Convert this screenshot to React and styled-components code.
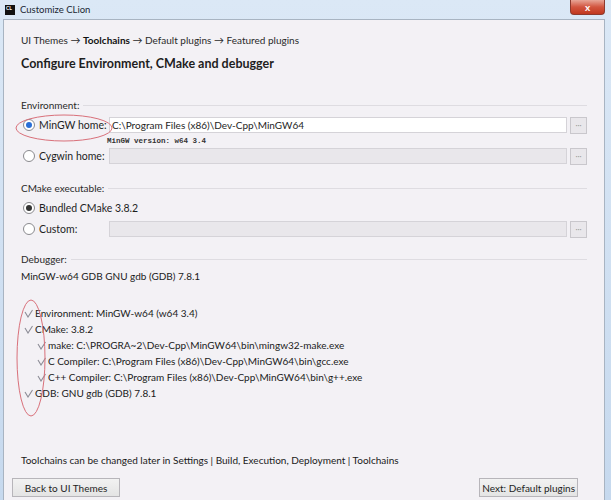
import React from 'react'
import styled, { createGlobalStyle } from 'styled-components'

const Global = createGlobalStyle`
  html, body { margin: 0; padding: 0; background: #c9dbee; }
  body { font-family: Lato, "Noto Sans", sans-serif; color: #1e1e1e; }
`

const Window = styled.div`
  width: 611px;
  height: 500px;
  display: flex;
  flex-direction: column;
  background: linear-gradient(180deg, #dbe8f6 0%, #c6d9ee 100%);
  overflow: hidden;
`

const TitleBar = styled.div`
  height: 19px;
  display: flex;
  align-items: center;
  padding: 0 6px 0 5px;
  gap: 5px;
  font-size: 9.5px;
  color: #1b2733;
`

const AppIcon = styled.div`
  width: 10px;
  height: 10px;
  background: #111;
  color: #fff;
  font-size: 5px;
  font-weight: 700;
  line-height: 6px;
  padding-left: 1px;
  box-sizing: border-box;
`

const CloseBtn = styled.div`
  margin-left: auto;
  width: 33px;
  height: 14px;
  margin-top: -5px;
  border-radius: 0 0 4px 4px;
  background: linear-gradient(180deg, #e8a597 0%, #d2553f 50%, #c1381f 100%);
  border: 1px solid #8d3a2e;
  border-top: none;
  color: #fff;
  font-size: 10px;
  font-weight: 700;
  display: flex;
  align-items: center;
  justify-content: center;
`

const Body = styled.div`
  flex: 1;
  margin: 0 6px 0 3px;
  background: #f3f1f5;
  border: 1px solid #a8b4c2;
  border-bottom: none;
  padding: 13px 17px 0 17px;
  display: flex;
  flex-direction: column;
  position: relative;
  font-size: 10px;
  line-height: 14px;
  color: #1a1a1a;
`

const Crumbs = styled.div`
  font-size: 10px;
  color: #2a2a2a;
  b { font-weight: 700; color: #111; }
`

const Heading = styled.div`
  margin-top: 9px;
  line-height: 16px;
  font-size: 12.5px;
  font-weight: 700;
  color: #1e1e1e;
`

const Legend = styled.div`
  display: flex;
  align-items: center;
  gap: 4px;
  margin-top: ${p => p.$top}px;
  font-size: 10px;
  color: #2a2a2a;
  &::after {
    content: '';
    flex: 1;
    height: 1px;
    background: #dedce1;
  }
`

const Row = styled.div`
  display: flex;
  align-items: center;
  margin-top: ${p => p.$top || 0}px;
  height: 18px;
`

const Radio = styled.span`
  width: 10px;
  height: 10px;
  border-radius: 50%;
  border: 1px solid #8a8a8e;
  background: #fff;
  margin: 0 4px 0 2px;
  display: flex;
  align-items: center;
  justify-content: center;
  flex: none;
  &::after {
    content: '';
    width: 6px;
    height: 6px;
    border-radius: 50%;
    background: ${p => (p.$blue ? '#2a6fd6' : '#333')};
    display: ${p => (p.$on ? 'block' : 'none')};
  }
`

const Label = styled.span`
  width: ${p => (p.$auto ? 'auto' : '70px')};
  white-space: nowrap;
  flex: none;
  font-size: 10.5px;
  color: #1e1e1e;
`

const Field = styled.div`
  flex: 1;
  height: 16px;
  box-sizing: border-box;
  border: 1px solid #d5d3d8;
  background: ${p => (p.$on ? '#ffffff' : '#e9e7eb')};
  font-size: 10px;
  line-height: 14px;
  padding-left: 2px;
  color: #1e1e1e;
  white-space: nowrap;
`

const Browse = styled.div`
  width: 17px;
  height: 17px;
  margin-left: 3px;
  box-sizing: border-box;
  border: 1px solid #c9c7cc;
  background: #e9e7eb;
  color: #999;
  font-size: 8px;
  display: flex;
  align-items: center;
  justify-content: center;
  flex: none;
`

const Mono = styled.div`
  margin: 2px 0 0 86px;
  font-family: "Liberation Mono", monospace;
  font-size: 7.5px;
  line-height: 10px;
  font-weight: 700;
  color: #333;
  height: 10px;
`

const Plain = styled.div`
  margin-top: ${p => p.$top || 0}px;
`

const Checks = styled.div`
  margin-top: 22px;
  display: flex;
  flex-direction: column;
`

const Check = styled.div`
  height: 16px;
  display: flex;
  align-items: center;
  gap: 2px;
  padding-left: ${p => p.$level * 13 + 3}px;
`

const Tick = () => (
  <svg width="9" height="9" viewBox="0 0 9 9">
    <path d="M1 3 L4 8 L8.5 1" fill="none" stroke="#8c8c96" strokeWidth="1.1" />
  </svg>
)

const Note = styled.div`
  margin-top: auto;
`

const Buttons = styled.div`
  display: flex;
  justify-content: space-between;
  padding: 11px 26px 3px 8px;
  margin: 0 -17px;
`

const Btn = styled.div`
  height: 19px;
  min-width: ${p => p.$w}px;
  padding: 0 2px;
  box-sizing: border-box;
  white-space: nowrap;
  border: 1px solid #b7b5ba;
  background: linear-gradient(180deg, #f2f2f2 0%, #e4e4e4 100%);
  font-size: 10px;
  display: flex;
  align-items: center;
  justify-content: center;
  color: #1e1e1e;
`

const Ring = styled.svg`
  position: absolute;
  pointer-events: none;
`

export default function App() {
  const checks = [
    [0, 'Environment: MinGW-w64 (w64 3.4)'],
    [0, 'CMake: 3.8.2'],
    [1, 'make: C:\\PROGRA~2\\Dev-Cpp\\MinGW64\\bin\\mingw32-make.exe'],
    [1, 'C Compiler: C:\\Program Files (x86)\\Dev-Cpp\\MinGW64\\bin\\gcc.exe'],
    [1, 'C++ Compiler: C:\\Program Files (x86)\\Dev-Cpp\\MinGW64\\bin\\g++.exe'],
    [0, 'GDB: GNU gdb (GDB) 7.8.1'],
  ]
  return (
    <Window>
      <Global />
      <TitleBar>
        <AppIcon>CL</AppIcon>
        <span>Customize CLion</span>
        <CloseBtn>x</CloseBtn>
      </TitleBar>
      <Body>
        <Crumbs>
          UI Themes → <b>Toolchains</b> → Default plugins → Featured plugins
        </Crumbs>
        <Heading>Configure Environment, CMake and debugger</Heading>

        <Legend $top={26}>Environment:</Legend>
        <Row $top={4}>
          <Radio $on $blue />
          <Label>MinGW home:</Label>
          <Field $on>C:\Program Files (x86)\Dev-Cpp\MinGW64</Field>
          <Browse>···</Browse>
        </Row>
        <Mono>MinGW version: w64 3.4</Mono>
        <Row $top={1}>
          <Radio />
          <Label>Cygwin home:</Label>
          <Field />
          <Browse>···</Browse>
        </Row>

        <Legend $top={16}>CMake executable:</Legend>
        <Row $top={4}>
          <Radio $on />
          <Label $auto>Bundled CMake 3.8.2</Label>
        </Row>
        <Row $top={3}>
          <Radio />
          <Label>Custom:</Label>
          <Field />
          <Browse>···</Browse>
        </Row>

        <Legend $top={14}>Debugger:</Legend>
        <Plain $top={3}>MinGW-w64 GDB GNU gdb (GDB) 7.8.1</Plain>

        <Checks>
          {checks.map(([lvl, text]) => (
            <Check key={text} $level={lvl}>
              <Tick />
              {text}
            </Check>
          ))}
        </Checks>

        <Note>Toolchains can be changed later in Settings | Build, Execution, Deployment | Toolchains</Note>
        <Buttons>
          <Btn $w={108}>Back to UI Themes</Btn>
          <Btn $w={93}>Next: Default plugins</Btn>
        </Buttons>

        <Ring width="100" height="32" style={{ left: 10, top: 92 }} viewBox="0 0 100 32">
          <ellipse cx="50" cy="16" rx="48" ry="13" fill="none" stroke="#d9707a" strokeWidth="1" />
        </Ring>
        <Ring width="34" height="120" style={{ left: 10, top: 278 }} viewBox="0 0 34 120">
          <ellipse cx="17" cy="60" rx="14" ry="58" fill="none" stroke="#d9707a" strokeWidth="1" />
        </Ring>
      </Body>
    </Window>
  )
}
